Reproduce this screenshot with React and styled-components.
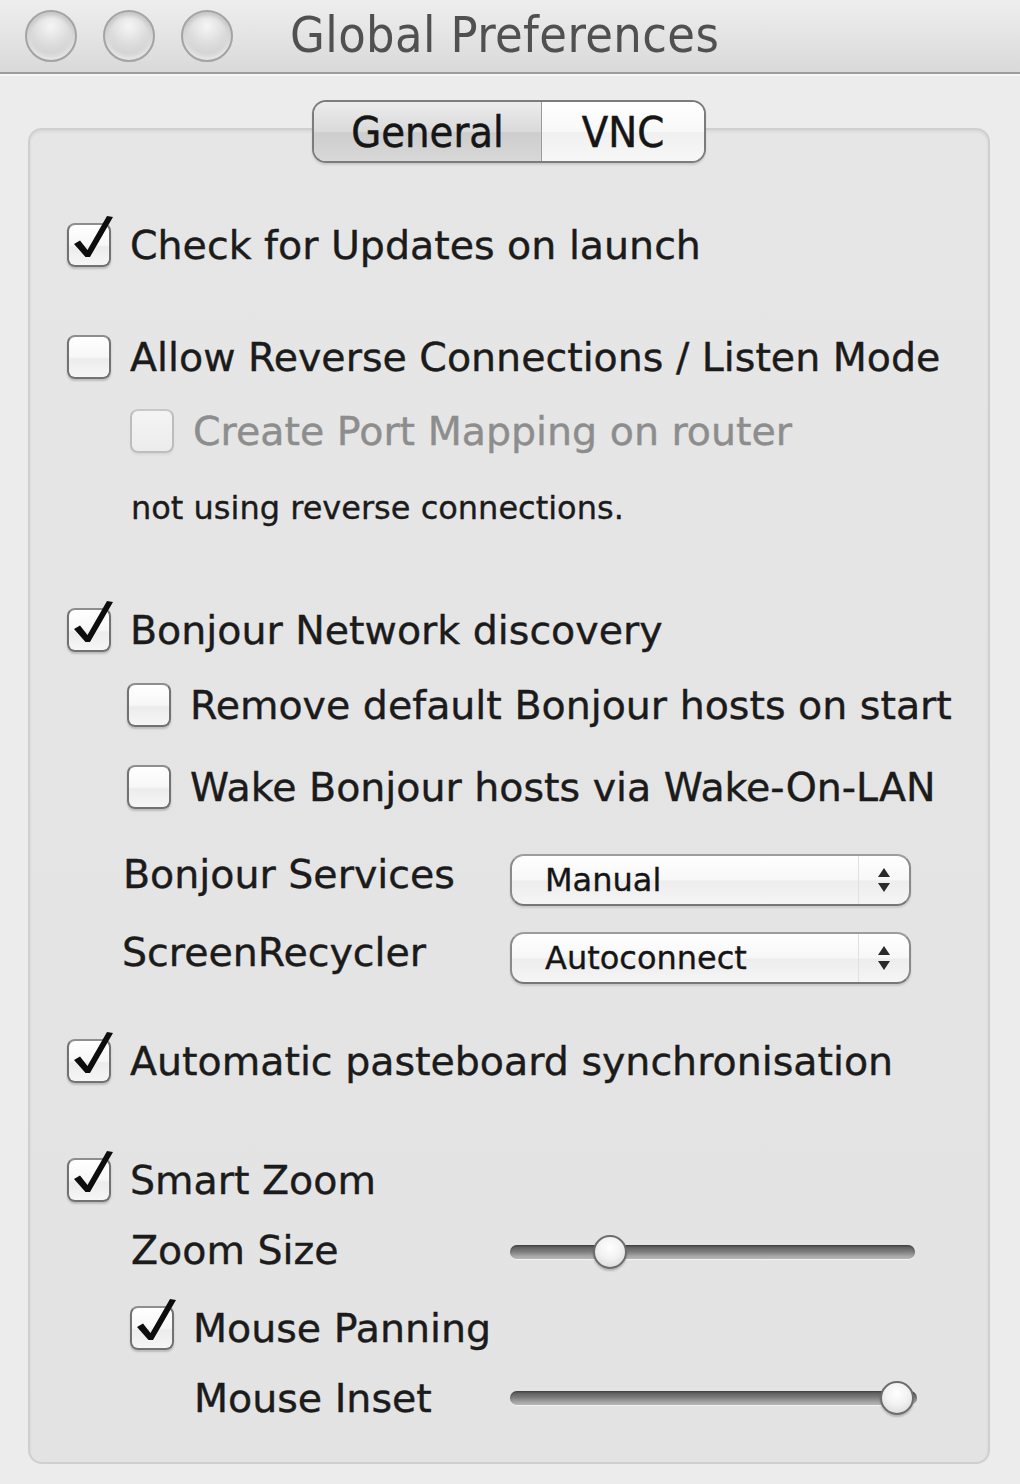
import React from 'react';
import styled, { createGlobalStyle } from 'styled-components';

const GlobalStyle = createGlobalStyle`
  html, body {
    margin: 0;
    padding: 0;
    background: #ececec;
  }
  body {
    font-family: "DejaVu Sans", "Liberation Sans", sans-serif;
    color: #1b1b1b;
  }
`

const Window = styled.div`
  width: 1020px;
  height: 1484px;
  display: flex;
  flex-direction: column;
  background: #ececec;
  overflow: hidden;
`

const TitleBar = styled.div`
  height: 72px;
  flex: none;
  display: flex;
  align-items: center;
  padding-left: 25px;
  background: linear-gradient(#eeeeee, #e6e6e6 40%, #d9d9d9);
  border-bottom: 2px solid #9c9c9c;
  box-shadow: 0 2px 0 #f6f6f6;
`

const Lights = styled.div`
  display: flex;
  gap: 26px;
`

const Light = styled.span`
  width: 48px;
  height: 48px;
  border-radius: 50%;
  border: 2px solid #a4a4a4;
  background: radial-gradient(circle at 50% 30%, #f5f5f5 0%, #dcdcdc 45%, #c6c6c6 100%);
  box-shadow: inset 0 -3px 5px rgba(255,255,255,0.6), inset 0 3px 4px rgba(0,0,0,0.14);
`

const Title = styled.h1`
  margin: 0 0 0 57px;
  font-family: "DejaVu Sans Condensed", "DejaVu Sans", sans-serif;
  font-stretch: condensed;
  font-weight: normal;
  font-size: 50px;
  color: #505050;
  letter-spacing: 0.4px;
  line-height: 1;
  padding-bottom: 2px;
`

const Body = styled.div`
  flex: 1;
  padding: 54px 30px 20px 28px;
  display: flex;
`

const Panel = styled.div`
  position: relative;
  flex: 1;
  border: 2px solid #cfcfcf;
  border-radius: 14px;
  background: linear-gradient(#e6e6e6, #e3e3e3);
  box-shadow: inset 0 2px 3px rgba(0,0,0,0.06);
  padding: 92px 0 0 0;
  display: flex;
  flex-direction: column;
`

const Tabs = styled.div`
  position: absolute;
  top: -30px;
  left: 282px;
  display: flex;
  height: 59px;
  border: 2px solid #7c7c7c;
  border-radius: 14px;
  overflow: hidden;
  box-shadow: 0 2px 2px rgba(0,0,0,0.12);
`

const Tab = styled.div`
  width: ${p => p.w}px;
  display: flex;
  align-items: center;
  justify-content: center;
  font-family: "DejaVu Sans Condensed", "DejaVu Sans", sans-serif;
  font-stretch: condensed;
  font-size: 43px;
  color: #151515;
  -webkit-text-stroke: 0.5px #151515;
  background: ${p => p.selected
    ? 'linear-gradient(#ececec, #dadada 50%, #cdcdcd 52%, #d8d8d8)'
    : 'linear-gradient(#ffffff, #f8f8f8 50%, #f0f0f0 52%, #f7f7f7)'};
  & + & {
    border-left: 1px solid #9a9a9a;
  }
`

const Row = styled.div`
  display: flex;
  align-items: center;
  height: ${p => p.h || 46}px;
  margin-top: ${p => p.mt || 0}px;
  padding-left: ${p => p.indent}px;
  white-space: nowrap;
`

const SettingRow = styled.div`
  display: grid;
  grid-template-columns: ${p => 480 - p.indent}px auto;
  align-items: center;
  height: ${p => p.h || 52}px;
  margin-top: ${p => p.mt || 0}px;
  padding-left: ${p => p.indent}px;
  white-space: nowrap;
`

const Label = styled.span`
  font-size: 39.5px;
  margin-left: ${p => p.gap || 0}px;
  color: ${p => p.disabled ? '#8d8d8d' : '#1b1b1b'};
  -webkit-text-stroke: 0.4px ${p => p.disabled ? '#8d8d8d' : '#1b1b1b'};
  position: relative;
  top: ${p => p.up ? -p.up : 0}px;
`

const Note = styled.span`
  font-size: 32px;
  color: #1b1b1b;
  -webkit-text-stroke: 0.35px #1b1b1b;
`

const Box = styled.span`
  position: relative;
  flex: none;
  width: 40px;
  height: 40px;
  border-radius: 8px;
  border: 2px solid ${p => p.disabled ? '#bdbdbd' : '#727272'};
  border-top-color: ${p => p.disabled ? '#c8c8c8' : '#8e8e8e'};
  background: ${p => p.disabled
    ? 'linear-gradient(#f4f4f4, #ececec)'
    : 'linear-gradient(#ffffff, #f7f7f7 50%, #ececec 55%, #f6f6f6)'};
  box-shadow: 0 2px 2px rgba(0,0,0,${p => p.disabled ? 0.06 : 0.18});
`

const Mark = styled.svg`
  position: absolute;
  left: -2px;
  top: -2px;
  overflow: visible;
`

function Checkbox({ checked, disabled }) {
  return (
    <Box disabled={disabled}>
      {checked && (
        <Mark width="44" height="44" viewBox="0 0 44 44">
          <path d="M7 21 L13 17.5 L20.5 27 L40 -7 L46 -6 L23 34 L18.5 34 Z" fill="#0d0d0d" />
        </Mark>
      )}
    </Box>
  )
}

function CheckRow({ checked, disabled, indent, mt, children }) {
  return (
    <Row indent={indent} mt={mt}>
      <Checkbox checked={checked} disabled={disabled} />
      <Label gap={19} disabled={disabled}>{children}</Label>
    </Row>
  )
}

const Popup = styled.div`
  width: 397px;
  height: 48px;
  display: flex;
  align-items: center;
  border: 2px solid #8a8a8a;
  border-top-color: #9d9d9d;
  border-bottom-color: #777777;
  border-radius: 14px;
  background: linear-gradient(#ffffff, #f7f7f7 50%, #ededed 52%, #f5f5f5);
  box-shadow: 0 2px 2px rgba(0,0,0,0.12);
  position: relative;
  top: 6px;
`

const PopupText = styled.span`
  flex: 1;
  padding-left: 33px;
  font-size: 32px;
  color: #151515;
  -webkit-text-stroke: 0.35px #151515;
`

const Arrows = styled.span`
  width: 50px;
  height: 100%;
  display: flex;
  align-items: center;
  justify-content: center;
  border-left: 1px solid #e0e0e0;
`

function PopupButton({ value }) {
  return (
    <Popup>
      <PopupText>{value}</PopupText>
      <Arrows>
        <svg width="14" height="26" viewBox="0 0 14 26">
          <path d="M7 1 L13 10 L1 10 Z" fill="#2a2a2a" />
          <path d="M1 16 L13 16 L7 25 Z" fill="#2a2a2a" />
        </svg>
      </Arrows>
    </Popup>
  )
}

const Track = styled.div`
  position: relative;
  width: ${p => p.w}px;
  height: 14px;
  border-radius: 7px;
  background: linear-gradient(#555555, #7a7a7a 45%, #a6a6a6 80%, #b9b9b9);
  box-shadow: inset 0 1px 2px rgba(0,0,0,0.3), 0 1px 0 rgba(255,255,255,0.6);
`

const Knob = styled.span`
  position: absolute;
  top: 50%;
  width: 30px;
  height: 30px;
  margin: -17px 0 0 -17px;
  border-radius: 50%;
  border: 2px solid #6d6d6d;
  background: radial-gradient(circle at 50% 35%, #ffffff 0%, #f2f2f2 45%, #d4d4d4 100%);
  box-shadow: 0 2px 2px rgba(0,0,0,0.2);
`

function Slider({ width, value }) {
  return (
    <Track w={width}>
      <Knob style={{ left: `${value}%` }} />
    </Track>
  )
}

export default function App() {
  return (
    <Window>
      <GlobalStyle />
      <TitleBar>
        <Lights>
          <Light />
          <Light />
          <Light />
        </Lights>
        <Title>Global Preferences</Title>
      </TitleBar>
      <Body>
        <Panel>
          <Tabs>
            <Tab w={227} selected>General</Tab>
            <Tab w={162}>VNC</Tab>
          </Tabs>

          <CheckRow checked indent={37}>Check for Updates on launch</CheckRow>

          <CheckRow indent={37} mt={66}>Allow Reverse Connections / Listen Mode</CheckRow>
          <CheckRow disabled indent={100} mt={28}>Create Port Mapping on router</CheckRow>
          <Row indent={101} h={40} mt={34}>
            <Note>not using reverse connections.</Note>
          </Row>

          <CheckRow checked indent={37} mt={79}>Bonjour Network discovery</CheckRow>
          <CheckRow indent={97} mt={29}>Remove default Bonjour hosts on start</CheckRow>
          <CheckRow indent={97} mt={36}>Wake Bonjour hosts via Wake-On-LAN</CheckRow>
          <SettingRow indent={93} mt={38}>
            <Label>Bonjour Services</Label>
            <PopupButton value="Manual" />
          </SettingRow>
          <SettingRow indent={92} mt={26}>
            <Label>ScreenRecycler</Label>
            <PopupButton value="Autoconnect" />
          </SettingRow>

          <CheckRow checked indent={37} mt={60}>Automatic pasteboard synchronisation</CheckRow>

          <CheckRow checked indent={37} mt={73}>Smart Zoom</CheckRow>
          <SettingRow indent={101} h={46} mt={26}>
            <Label up={2}>Zoom Size</Label>
            <Slider width={405} value={24.7} />
          </SettingRow>
          <CheckRow checked indent={100} mt={30}>Mouse Panning</CheckRow>
          <SettingRow indent={164} h={46} mt={24}>
            <Label>Mouse Inset</Label>
            <Slider width={407} value={95} />
          </SettingRow>
        </Panel>
      </Body>
    </Window>
  )
}
